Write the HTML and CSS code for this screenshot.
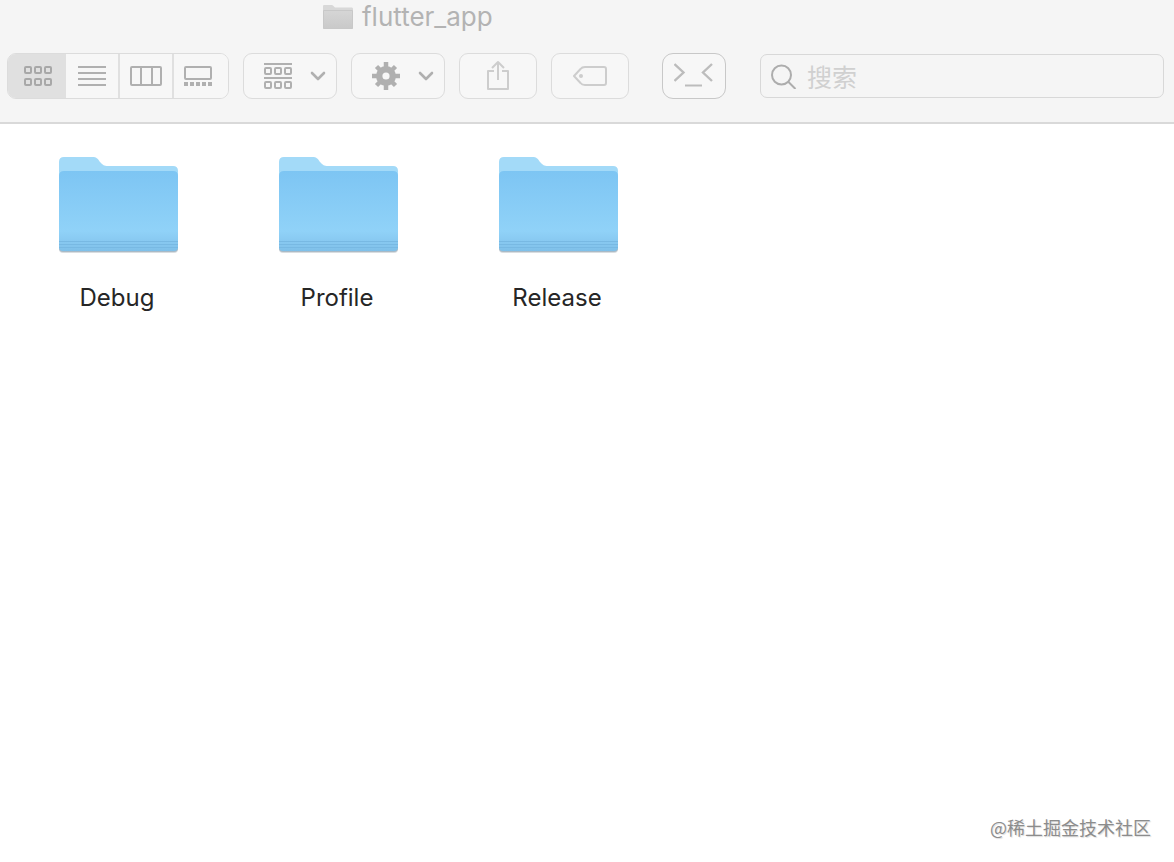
FILE: index.html
```html
<!DOCTYPE html>
<html lang="zh-CN">
<head>
<meta charset="utf-8">
<meta name="viewport" content="width=device-width, initial-scale=1">
<title>flutter_app</title>
<link rel="stylesheet" href="styles.css">
</head>
<body>
<svg class="defs" aria-hidden="true">
  <defs>
    <linearGradient id="front" x1="0" y1="0" x2="0" y2="1">
      <stop offset="0" stop-color="#7dc5f3"/>
      <stop offset="0.75" stop-color="#90d2f8"/>
      <stop offset="0.86" stop-color="#89caf2"/>
      <stop offset="1" stop-color="#7fc0e9"/>
    </linearGradient>
    <linearGradient id="gray" x1="0" y1="0" x2="0" y2="1">
      <stop offset="0" stop-color="#d6d6d6"/>
      <stop offset="1" stop-color="#c9c9c9"/>
    </linearGradient>
    <symbol id="folder" viewBox="0 0 124 100">
      <path d="M4 90H123V94Q123 98 119 98H8Q4 98 4 94z" fill="#d9dde0"/>
      <path d="M4 90H123V93Q123 97 119 97H8Q4 97 4 93z" fill="#a9bac6"/>
      <path d="M4 21V7q0-5 5-5H37c5 0 6 2 8 5 3 3 4 4 8 4H118q5 0 5 5V25H4z" fill="#a3daf8"/>
      <path d="M4 21q0-5 5-5H118q5 0 5 5V92q0 4-4 4H8q-4 0-4-4z" fill="url(#front)"/>
      <path d="M4 86.500H123M4 89.500H123M4 92.500H123" stroke="#78b9e3" stroke-width="1"/>
    </symbol>
    <symbol id="chevron" viewBox="0 0 16 10">
      <path d="M2 2L8 8L14 2" fill="none" stroke="#b0b0b0" stroke-width="2.600" stroke-linecap="round" stroke-linejoin="round"/>
    </symbol>
  </defs>
</svg>

<header class="header">
  <h1 class="title">
    <svg width="30" height="24" viewBox="0 0 30 24" aria-hidden="true">
      <path d="M0 23.500V1Q0 0 1 0H9Q10 0 12 2.500H29Q30 2.500 30 4V23.500z" fill="#d8d8d8"/>
      <path d="M.5 5.500H29.500V23.500H.5z" fill="url(#gray)" stroke="#c8c8c8"/>
    </svg>
    <span>flutter_app</span>
  </h1>
  <div class="toolbar">
    <div class="views" role="group" aria-label="显示">
      <button class="view view-on" type="button" aria-label="图标" aria-pressed="true">
        <svg width="30" height="22" viewBox="0 0 30 22" fill="none" stroke="#a8a8a8" stroke-width="2">
          <rect x="2" y="2" width="6" height="6" rx="1"/><rect x="12" y="2" width="6" height="6" rx="1"/><rect x="22" y="2" width="6" height="6" rx="1"/>
          <rect x="2" y="14" width="6" height="6" rx="1"/><rect x="12" y="14" width="6" height="6" rx="1"/><rect x="22" y="14" width="6" height="6" rx="1"/>
        </svg>
      </button>
      <button class="view" type="button" aria-label="列表">
        <svg width="28" height="20" viewBox="0 0 28 20" stroke="#b0b0b0" stroke-width="2"><path d="M0 1H28M0 7H28M0 13H28M0 19H28"/></svg>
      </button>
      <button class="view" type="button" aria-label="分栏">
        <svg width="32" height="20" viewBox="0 0 32 20" fill="none" stroke="#b0b0b0" stroke-width="2"><rect x="1" y="1" width="30" height="18" rx="1"/><path d="M11 1V19M22 1V19"/></svg>
      </button>
      <button class="view view-last" type="button" aria-label="画廊">
        <svg width="28" height="20" viewBox="0 0 28 20" fill="none" stroke="#b0b0b0" stroke-width="2"><rect x="1" y="1" width="26" height="12" rx="1"/><path d="M0 18H28" stroke-width="4" stroke-dasharray="4 2"/></svg>
      </button>
    </div>
    <button class="tool menu" type="button" aria-label="排列">
      <svg width="28" height="26" viewBox="0 0 28 26" fill="none" stroke="#b0b0b0" stroke-width="2">
        <path d="M0 1H28M0 15H28"/>
        <rect x="1" y="5" width="6" height="6" rx="1"/><rect x="11" y="5" width="6" height="6" rx="1"/><rect x="21" y="5" width="6" height="6" rx="1"/>
        <rect x="1" y="19" width="6" height="6" rx="1"/><rect x="11" y="19" width="6" height="6" rx="1"/><rect x="21" y="19" width="6" height="6" rx="1"/>
      </svg>
      <svg width="16" height="10"><use href="#chevron"/></svg>
    </button>
    <button class="tool menu" type="button" aria-label="操作">
      <svg width="28" height="28" viewBox="-14 -14 28 28" fill="none" stroke="#b0b0b0">
        <circle r="6.800" stroke-width="6.400"/>
        <path d="M0-14V-8M0 14V8M-14 0H-8M14 0H8M-9.500-9.500L-6-6M9.500-9.500L6-6M-9.500 9.500L-6 6M9.500 9.500L6 6" stroke-width="4.500"/>
      </svg>
      <svg width="16" height="10"><use href="#chevron"/></svg>
    </button>
    <button class="tool single" type="button" aria-label="共享">
      <svg width="22" height="32" viewBox="0 0 22 32" fill="none" stroke="#cdcdcd" stroke-width="2" stroke-linejoin="round"><path d="M7 11H1V29H21V11H15M11 20V2M5 8L11 2L17 8"/></svg>
    </button>
    <button class="tool single" type="button" aria-label="标签">
      <svg width="34" height="20" viewBox="0 0 34 20" fill="none" stroke="#cdcdcd" stroke-width="2" stroke-linejoin="round"><path d="M1 10L7.500 3Q9 1 12 1H31Q33 1 33 3V17Q33 19 31 19H12Q9 19 7.500 17z"/><circle cx="8" cy="10" r="2" fill="#cdcdcd" stroke="none"/></svg>
    </button>
    <button class="tool terminal" type="button" aria-label="终端">
      <svg width="40" height="26" viewBox="0 0 40 26" fill="none" stroke="#bcbcbc" stroke-width="2.400"><path d="M.5 1L9.500 9.500L.5 18M38 1L29 9.500L38 18"/><path d="M11 22.500H28" stroke-width="2"/></svg>
    </button>
    <label class="search">
      <svg width="26" height="26" viewBox="0 0 26 26" fill="none" stroke="#adadad" stroke-width="2"><circle cx="10.500" cy="12" r="9.500"/><path d="M17 18.500L24.500 26"/></svg>
      <input class="search-input" type="search" placeholder="搜索" aria-label="搜索">
    </label>
  </div>
</header>

<main class="files">
  <a class="file" href="#debug"><svg width="124" height="100" aria-hidden="true"><use href="#folder"/></svg><span>Debug</span></a>
  <a class="file" href="#profile"><svg width="124" height="100" aria-hidden="true"><use href="#folder"/></svg><span>Profile</span></a>
  <a class="file" href="#release"><svg width="124" height="100" aria-hidden="true"><use href="#folder"/></svg><span>Release</span></a>
</main>
<footer class="credit">@稀土掘金技术社区</footer>
</body>
</html>
```
FILE: styles.css
```css
* {
  box-sizing: border-box;
}

body {
  margin: 0;
  min-height: 100vh;
  display: flex;
  flex-direction: column;
  background: #fff;
  color: #262626;
  font-family: Inter, "Noto Sans CJK SC", sans-serif;
}

svg {
  display: block;
  flex: none;
}

.defs {
  position: absolute;
  width: 0;
  height: 0;
}

.header {
  padding-bottom: 23px;
  border-bottom: 2px solid #d9d9d9;
  background: #f5f5f5;
}

.title {
  display: flex;
  align-items: center;
  gap: 9px;
  margin: 0 0 19px 323px;
  color: #b3b3b3;
  font-size: 26px;
  font-weight: 400;
  line-height: 34px;
}

.toolbar {
  display: flex;
  align-items: center;
  padding: 0 10px 0 7px;
}

.views {
  display: flex;
  height: 46px;
  margin-right: 14px;
  overflow: hidden;
  border: 1px solid #dcdcdc;
  border-radius: 9px;
}

.view {
  display: flex;
  align-items: center;
  justify-content: center;
  width: 54px;
  padding: 0;
  border: 0;
  border-left: 2px solid #e0e0e0;
  background: #f7f7f7;
}

.view-on {
  width: 56px;
  padding-left: 3px;
  border-left: 0;
  background: #e0e0e0;
}

.view-last {
  width: 56px;
  padding-right: 6px;
}

.tool {
  display: flex;
  align-items: center;
  justify-content: center;
  height: 46px;
  margin-right: 14px;
  padding: 0;
  border: 1px solid #dcdcdc;
  border-radius: 9px;
  background: #f7f7f7;
}

.menu {
  width: 94px;
  gap: 18px;
  padding-left: 10px;
}

.single {
  width: 78px;
}

.terminal {
  width: 64px;
  margin: 0 34px 0 19px;
  border-color: #c8c8c8;
  border-radius: 11px;
}

.search {
  display: flex;
  flex: 1;
  align-items: center;
  gap: 10px;
  height: 44px;
  padding: 0 10px;
  border: 1px solid #d8d8d8;
  border-radius: 7px;
}

.search-input {
  flex: 1;
  min-width: 0;
  padding: 0;
  border: 0;
  outline: 0;
  background: transparent;
  color: #555;
  font: 25px "Noto Sans CJK SC", sans-serif;
}

.search-input::placeholder {
  color: #d0d0d0;
}

.files {
  display: flex;
  flex: 1;
  flex-wrap: wrap;
  align-content: flex-start;
  gap: 40px;
  padding: 31px 27px;
}

.file {
  display: flex;
  flex-direction: column;
  align-items: center;
  gap: 26px;
  width: 180px;
  color: inherit;
  font-size: 24px;
  line-height: 34px;
  text-decoration: none;
}

.credit {
  padding: 0 23px 21px;
  color: #8c8c8c;
  font: 18px/28px "Noto Sans CJK SC", sans-serif;
  text-align: right;
  text-shadow: 1px 1px 1px #ddd;
}
```
